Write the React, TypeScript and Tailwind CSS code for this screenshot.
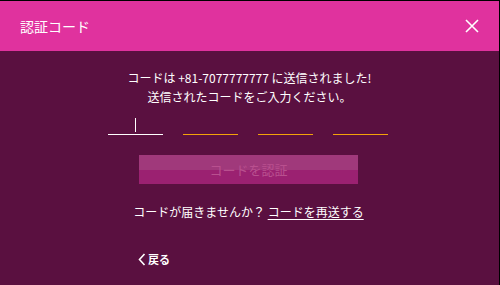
import React from 'react';

export default function App() {
  const slots = [0, 1, 2, 3];
  return (
    <div
      className="w-[500px] h-[285px] flex flex-col bg-[#5a1040] border-t border-r border-black overflow-hidden"
      style={{ fontFamily: '"Noto Sans CJK JP", "Noto Sans", sans-serif' }}
    >
      <div className="h-[50px] bg-[#e0329e] flex items-center justify-between pl-[20px] pr-[20px] shrink-0">
        <span className="text-white text-[14px] leading-none">認証コード</span>
        <button className="w-[14px] h-[14px] flex items-center justify-center">
          <svg width="14" height="14" viewBox="0 0 14 14" fill="none" stroke="white" strokeWidth="1.6">
            <path d="M1 1 L13 13 M13 1 L1 13" />
          </svg>
        </button>
      </div>
      <div className="flex flex-col items-center pt-[17px]">
        <div className="text-white text-[12px] leading-[19px] text-center">
          <p>コードは +81-7077777777 に送信されました!</p>
          <p>送信されたコードをご入力ください。</p>
        </div>
        <div className="flex gap-[20px] mt-[12px] ml-[-3px]">
          {slots.map((i) => (
            <div
              key={i}
              className={`relative w-[55px] h-[17px] border-b ${i === 0 ? 'border-white' : 'border-[#f2a20a]'}`}
            >
              {i === 0 && <span className="absolute left-[27px] top-0 w-px h-[14px] bg-white" />}
            </div>
          ))}
        </div>
        <button className="mt-[20px] w-[219px] h-[29px] flex flex-col relative ml-[-2px]">
          <span className="h-[15px] w-full bg-[#a0397b]" />
          <span className="h-[14px] w-full bg-[#9b2171]" />
          <span className="absolute inset-0 flex items-center justify-center text-[13px] text-[#b9508f]">
            コードを認証
          </span>
        </button>
        <p className="mt-[18px] text-white text-[12px] leading-[19px] ml-[-2px]">
          コードが届きませんか？ <span className="underline underline-offset-2">コードを再送する</span>
        </p>
      </div>
      <div className="mt-[32px] pl-[138px] flex items-center gap-[2px] text-white">
        <svg width="8" height="13" viewBox="0 0 8 13" fill="none" stroke="white" strokeWidth="1.6">
          <path d="M6.5 1 L1.5 6.5 L6.5 12" />
        </svg>
        <span className="text-[11px] font-bold leading-none">戻る</span>
      </div>
    </div>
  );
}
